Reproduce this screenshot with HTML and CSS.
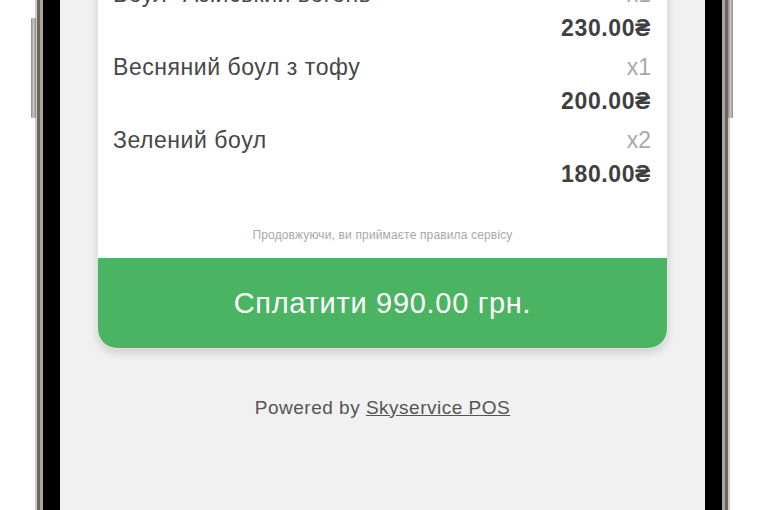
FILE: index.html
```html
<!DOCTYPE html>
<html lang="uk">
<head>
<meta charset="utf-8">
<title>Оплата</title>
<link rel="stylesheet" href="styles.css">
</head>
<body>
<div class="phone">
  <span class="side-btn side-btn-left"></span>
  <span class="side-btn side-btn-right"></span>
  <div class="bezel">
    <div class="screen">
      <div class="card">
        <ul class="items">
          <li class="item">
            <div class="item-row"><span class="item-name">Боул "Азійський вогонь"</span><span class="item-qty">x1</span></div>
            <div class="item-price">230.00₴</div>
          </li>
          <li class="item">
            <div class="item-row"><span class="item-name">Весняний боул з тофу</span><span class="item-qty">x1</span></div>
            <div class="item-price">200.00₴</div>
          </li>
          <li class="item">
            <div class="item-row"><span class="item-name">Зелений боул</span><span class="item-qty">x2</span></div>
            <div class="item-price">180.00₴</div>
          </li>
        </ul>
        <p class="legal">Продовжуючи, ви приймаєте правила сервісу</p>
        <button class="pay-btn">Сплатити 990.00 грн.</button>
      </div>
      <p class="powered">Powered by <a href="#" class="powered-link">Skyservice POS</a></p>
    </div>
  </div>
</div>
</body>
</html>
```
FILE: styles.css
```css
html, body {
  margin: 0;
  padding: 0;
  height: 510px;
  overflow: hidden;
  background: #ffffff;
  font-family: "Liberation Sans", Arial, "DejaVu Sans", sans-serif;
}

.phone {
  position: relative;
  margin-left: 35px;
  width: 695px;
  height: 620px;
  margin-top: -60px;
  padding: 0 8px;
  box-sizing: border-box;
  background: linear-gradient(to right,
    #cfccc6 0, #cfccc6 2px,
    #6a665f 2px, #6a665f 5px,
    #aaa69f 5px, #aaa69f 8px,
    #000 8px, #000 calc(100% - 8px),
    #aaa69f calc(100% - 8px), #aaa69f calc(100% - 5px),
    #6a665f calc(100% - 5px), #6a665f calc(100% - 2px),
    #cfccc6 calc(100% - 2px), #cfccc6 100%);
}

.side-btn {
  position: absolute;
  width: 5px;
  background: linear-gradient(to right, #8d8983, #c9c6c0 50%, #8d8983);
  border-radius: 1px;
}

.side-btn-left {
  left: -4px;
  top: 78px;
  height: 100px;
}

.side-btn-right {
  right: -3px;
  top: 0;
  height: 178px;
}

.bezel {
  height: 100%;
  background: #000;
  padding: 0 17px;
}

.screen {
  height: 100%;
  background: #f1f1f1;
  padding: 0 37px;
  display: flex;
  flex-direction: column;
}

.card {
  margin-top: 20px;
  background: #ffffff;
  border: 1px solid #e3e3e3;
  border-top: none;
  border-radius: 0 0 20px 20px;
  box-shadow: 0 4px 8px rgba(0, 0, 0, 0.14);
  display: flex;
  flex-direction: column;
  overflow: hidden;
}

.items {
  list-style: none;
  margin: 0;
  padding: 17px 16px 0 15px;
  display: flex;
  flex-direction: column;
  gap: 5px;
}

.item-row {
  display: flex;
  justify-content: space-between;
  align-items: center;
  height: 34px;
}

.item-name {
  font-size: 23px;
  color: #474747;
  letter-spacing: 0.55px;
}

.item-qty {
  font-size: 23px;
  color: #a9a9a9;
}

.item-price {
  height: 34px;
  line-height: 34px;
  text-align: right;
  font-size: 23px;
  font-weight: bold;
  color: #3f3f3f;
  letter-spacing: 0.6px;
}

.legal {
  margin: 37px 0 16px;
  text-align: center;
  font-size: 12px;
  line-height: 14px;
  color: #a8a8a8;
  letter-spacing: 0.15px;
}

.pay-btn {
  height: 90px;
  border: none;
  background: #4bb462;
  color: #ffffff;
  font-family: "Liberation Sans", Arial, sans-serif;
  font-size: 29px;
  letter-spacing: 0.7px;
  padding: 0;
}

.powered {
  margin: 48px 0 0;
  text-align: center;
  font-size: 19px;
  line-height: 22px;
  color: #555555;
  letter-spacing: 0.5px;
}

.powered-link {
  color: #555555;
  text-decoration: underline;
}
```
